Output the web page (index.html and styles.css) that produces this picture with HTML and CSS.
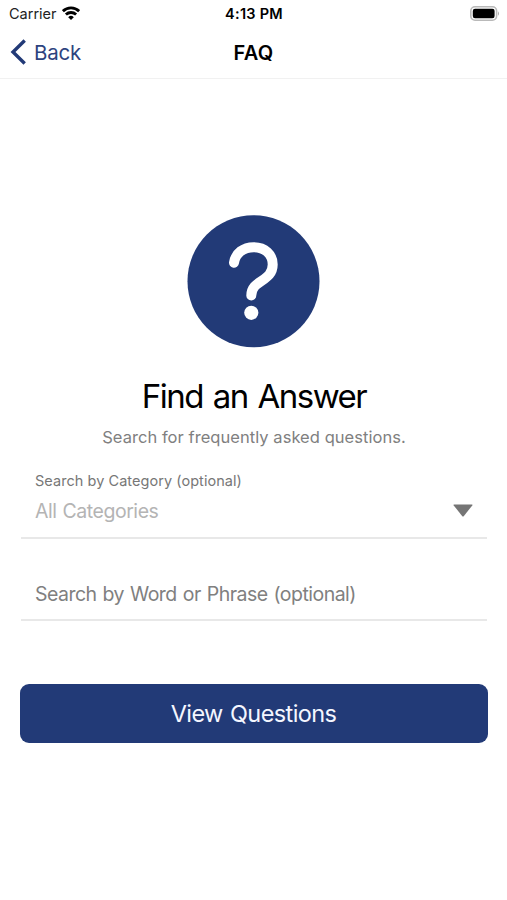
FILE: index.html
```html
<!DOCTYPE html>
<html lang="en">
<head>
<meta charset="utf-8">
<title>FAQ</title>
<link rel="stylesheet" href="styles.css">
</head>
<body>
<header class="top">
  <div class="status">
    <div class="carrier"><span>Carrier</span>
      <svg class="wifi" width="18" height="14" viewBox="0 0 18 14" fill="none" stroke="#000" stroke-width="2.8"><path d="M.9 5.200C5.400.7 12.600.7 17.100 5.200"/><path d="M3.900 8.600c2.900-2.800 7.300-2.800 10.200 0"/><path d="M9 14 6.200 11.200a4 4 0 0 1 5.600 0Z" fill="#000" stroke="none"/></svg>
    </div>
    <div class="time">4:13 PM</div>
    <svg class="battery" width="30" height="15" viewBox="0 0 30 15"><rect x=".8" y=".8" width="25.800" height="13.400" rx="4.200" fill="#fff" stroke="#b9b9b9" stroke-width="1.600"/><rect x="2.800" y="2.800" width="21.800" height="9.400" rx="2.200"/><path d="M28 5.200q2 2.300 0 4.600Z" fill="#aaa"/></svg>
  </div>
  <nav class="nav">
    <a class="back"><svg width="17" height="26" viewBox="0 0 17 26" fill="none" stroke="#223a77" stroke-width="3.400"><path d="M14.700 1.500 3 13l11.700 11.500"/></svg><span>Back</span></a>
    <h1 class="title">FAQ</h1>
  </nav>
</header>
<main class="content">
  <svg class="hero" width="133" height="133" viewBox="0 0 133 133"><circle cx="66.500" cy="66.200" r="66" fill="#223a77"/><path d="M47 47.700C48.500 38 56.500 32.200 66.700 32.200C78 32.200 85.700 39.500 85.700 49.500C85.700 67 64.300 64.500 64.300 80.500" fill="none" stroke="#fff" stroke-width="10" stroke-linecap="round"/><circle cx="64.300" cy="97.800" r="7.100" fill="#fff"/></svg>
  <h2 class="heading"><span>Find an Answer</span></h2>
  <p class="sub"><span>Search for frequently asked questions.</span></p>
  <div class="field category">
    <div class="label"><span>Search by Category (optional)</span></div>
    <div class="row"><span class="value">All Categories</span><svg class="arrow" width="20" height="13" viewBox="0 0 20 13"><path d="M1.200.5h17.600q1.200 0 .5.900l-8.400 10.500q-.9 1-1.800 0L.7 1.400Q0 .5 1.200.5Z" fill="#757575"/></svg></div>
  </div>
  <div class="field phrase"><span>Search by Word or Phrase (optional)</span></div>
  <button class="button"><span>View Questions</span></button>
</main>
</body>
</html>
```
FILE: styles.css
```css
* { box-sizing: border-box; }
body { margin: 0; height: 900px; background: #fff; color: #000; font-family: Inter, "Liberation Sans", sans-serif; overflow: hidden; }
h1, h2, p { margin: 0; font-weight: 400; }
svg { display: block; flex: none; }
.top { height: 79px; border-bottom: 1px solid #f1f1f1; }
.status { height: 27px; display: grid; grid-template-columns: 1fr auto 1fr; align-items: center; padding: 0 7px 0 9px; }
.carrier { display: flex; align-items: center; gap: 5px; font-size: 14.500px; color: #222; }
.wifi { margin-top: -2px; }
.time { font-size: 14.500px; font-weight: 600; letter-spacing: .25px; margin-left: -1px; }
.battery { justify-self: end; }
.nav { height: 51px; display: grid; grid-template-columns: 1fr auto 1fr; align-items: center; padding: 0 10px; }
.back { display: flex; align-items: center; gap: 7px; color: #2d437e; font-size: 20.500px; letter-spacing: -.2px; }
.back svg { margin-top: -2px; }
.title { font-size: 20px; font-weight: 600; letter-spacing: .3px; }
.content { padding: 136px 20px 0 21px; display: flex; flex-direction: column; align-items: center; }
.hero { margin-left: -1px; }
.heading { margin-top: 27px; font-size: 33px; line-height: 42px; letter-spacing: -1.500px; word-spacing: 2px; white-space: nowrap; }
.sub { margin-top: 9px; font-size: 16.500px; line-height: 22px; letter-spacing: .05px; color: #808080; white-space: nowrap; }
.field { width: 100%; border-bottom: 2px solid #e8e8e8; padding: 0 14px; white-space: nowrap; }
.category { margin-top: 23px; height: 68px; }
.label { font-size: 14.500px; line-height: 20px; letter-spacing: .05px; color: #777; }
.row { display: flex; justify-content: space-between; align-items: center; height: 40px; font-size: 19.500px; letter-spacing: -.46px; word-spacing: 1px; color: #b4b4b4; }
.arrow { margin-top: -2px; }
.phrase { height: 82px; padding-top: 42px; font-size: 19.500px; line-height: 26px; letter-spacing: -.52px; word-spacing: 1px; color: #808080; }
.button { width: 468px; height: 59px; margin: 63px 0 0 -1px; border: 0; border-radius: 9px; background: #223a77; color: #f4f6ff; font: 400 23.500px Inter, "Liberation Sans", sans-serif; letter-spacing: -.6px; word-spacing: 1.300px; }
```
